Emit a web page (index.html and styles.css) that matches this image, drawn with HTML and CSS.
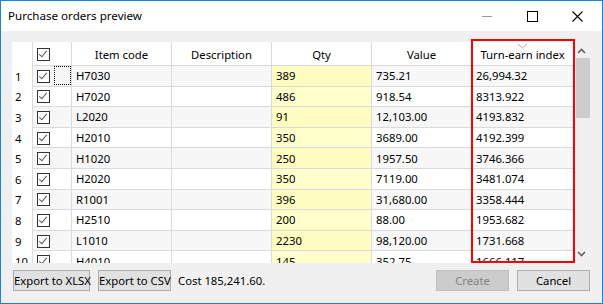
FILE: index.html
```html
<!DOCTYPE html>
<html>
<head>
    <meta charset="utf-8">
    <title>Purchase orders preview</title>
    <link rel="stylesheet" href="styles.css">
</head>
<body>
    <div class="window">
        <div class="titlebar">
            <div class="title">Purchase orders preview</div>
            <div class="caption-buttons">
                <svg class="cap" width="45" height="30" viewBox="0 0 45 30"><line x1="17" y1="15.5" x2="27" y2="15.5" stroke="#999" stroke-width="1"/></svg>
                <svg class="cap" width="45" height="30" viewBox="0 0 45 30"><rect x="17.5" y="10.5" width="10" height="10" fill="none" stroke="#000" stroke-width="1"/></svg>
                <svg class="cap" width="45" height="30" viewBox="0 0 45 30"><path d="M17.5 10.5 L27.5 20.5 M27.5 10.5 L17.5 20.5" stroke="#000" stroke-width="1.1"/></svg>
            </div>
        </div>
        <div class="content">
            <div class="grid">
                <div class="table-wrap">
                    <table class="orders">
                        <thead>
                            <tr>
                                <th class="c-num"></th>
                                <th class="c-chk"><span class="checkbox checked"></span></th>
                                <th class="c-col">Item code</th>
                                <th class="c-col">Description</th>
                                <th class="c-col">Qty</th>
                                <th class="c-col">Value</th>
                                <th class="c-last">Turn-earn index<svg class="sort" width="11" height="6" viewBox="0 0 11 6"><path d="M1 1 L5.5 5 L10 1" fill="none" stroke="#a8a8a8" stroke-width="1"/></svg></th>
                            </tr>
                        </thead>
                        <tbody id="rows"></tbody>
                    </table>
                </div>
                <div class="scrollbar">
                    <svg class="arrow" width="17" height="12" viewBox="0 0 17 12"><path d="M5 8 L8.5 4.5 L12 8" fill="none" stroke="#606060" stroke-width="1.6"/></svg>
                    <div class="thumb"></div>
                    <svg class="arrow down" width="17" height="12" viewBox="0 0 17 12"><path d="M5 4 L8.5 7.5 L12 4" fill="none" stroke="#606060" stroke-width="1.6"/></svg>
                </div>
                <div class="highlight"></div>
            </div>
            <div class="footer">
                <button class="btn btn-xlsx">Export to XLSX</button>
                <button class="btn">Export to CSV</button>
                <span class="cost">Cost 185,241.60.</span>
                <span class="spacer"></span>
                <button class="btn" disabled>Create</button>
                <button class="btn">Cancel</button>
            </div>
        </div>
    </div>
    <script>
        const orders = [
            ['H7030', '389', '735.21', '26,994.32'],
            ['H7020', '486', '918.54', '8313.922'],
            ['L2020', '91', '12,103.00', '4193.832'],
            ['H2010', '350', '3689.00', '4192.399'],
            ['H1020', '250', '1957.50', '3746.366'],
            ['H2020', '350', '7119.00', '3481.074'],
            ['R1001', '396', '31,680.00', '3358.444'],
            ['H2510', '200', '88.00', '1953.682'],
            ['L1010', '2230', '98,120.00', '1731.668'],
            ['H4010', '145', '352.75', '1666.117']
        ];
        const body = document.getElementById('rows');
        orders.forEach((row, i) => {
            const tr = document.createElement('tr');
            tr.className = i % 2 === 0 ? 'odd' : 'even';
            tr.innerHTML =
                '<td class="num">' + (i + 1) + '</td>' +
                '<td class="chk"><span class="checkbox checked"></span>' +
                (i === 0 ? '<span class="focus"></span>' : '') + '</td>' +
                '<td>' + row[0] + '</td>' +
                '<td></td>' +
                '<td class="qty">' + row[1] + '</td>' +
                '<td>' + row[2] + '</td>' +
                '<td class="last">' + row[3] + '</td>';
            body.appendChild(tr);
        });
    </script>
</body>
</html>
```

FILE: styles.css
```css
html, body {
    margin: 0;
    padding: 0;
}
body {
    font-family: "Noto Sans", "Open Sans", sans-serif;
    font-size: 11.3px;
    color: #000;
    background: #fff;
}
.window {
    width: 603px;
    height: 304px;
    box-sizing: border-box;
    border: 1px solid #1883d7;
    background: #f0f0f0;
    display: flex;
    flex-direction: column;
}
.titlebar {
    height: 30px;
    background: #fff;
    display: flex;
    align-items: center;
}
.title {
    flex: 1;
    padding-left: 7px;
    padding-bottom: 1px;
    font-size: 11.6px;
    color: #000;
}
.caption-buttons {
    display: flex;
    align-self: stretch;
    margin-right: 2px;
}
.cap {
    display: block;
}
.content {
    flex: 1;
    padding: 11px 11px 0 11px;
    display: flex;
    flex-direction: column;
}
.grid {
    position: relative;
    height: 221px;
    display: flex;
}
.table-wrap {
    width: 561px;
    overflow: hidden;
    background: #fff;
}
.orders {
    table-layout: fixed;
    border-collapse: separate;
    border-spacing: 0;
    width: 561px;
}
.orders th, .orders td {
    box-sizing: border-box;
    padding: 0 4px;
    border-right: 1px solid #dadada;
    border-bottom: 1px solid #dadada;
    white-space: nowrap;
    overflow: hidden;
    text-align: left;
    font-weight: normal;
}
.orders th {
    height: 24px;
    text-align: center;
    background: #fff;
    padding-top: 1px;
}
.orders td {
    height: 20.6px;
    line-height: 19px;
}
.orders .c-num { width: 21px; border-bottom: none; }
.orders .c-chk { width: 39px; text-align: left; }
.orders .c-col { width: 100px; }
.orders .c-last { width: 101px; border-right: none; position: relative; overflow: visible; }
.orders td.num {
    background: #fff;
    border-bottom: none;
    padding-left: 3px;
}
.orders td.last { border-right: none; }
.orders tr.odd td { background: #f7f7f7; }
.orders tr.even td { background: #fff; }
.orders tr.odd td.num, .orders tr.even td.num { background: #fff; }
.orders tr.odd td.qty { background: #fffcc2; }
.orders tr.even td.qty { background: #ffffcc; }
.orders td.chk, .orders th.c-chk {
    position: relative;
    padding-left: 4px;
}
.checkbox {
    display: inline-block;
    width: 13px;
    height: 13px;
    box-sizing: border-box;
    border: 1px solid #333;
    background: #fff;
    vertical-align: middle;
    position: relative;
    top: -1px;
}
.checkbox.checked::after {
    content: "";
    position: absolute;
    left: 3px;
    top: 0px;
    width: 3px;
    height: 7px;
    border-right: 1.5px solid #555;
    border-bottom: 1.5px solid #555;
    transform: rotate(40deg);
}
.focus {
    position: absolute;
    left: 21px;
    top: 0;
    width: 17px;
    height: 19px;
    box-sizing: border-box;
    border: 1px dotted #000;
}
.sort {
    position: absolute;
    left: 45px;
    top: 1px;
    display: block;
}
.scrollbar {
    width: 17px;
    display: flex;
    flex-direction: column;
    align-items: flex-end;
}
.arrow {
    display: block;
    margin-top: 3px;
}
.arrow.down {
    margin-top: auto;
    margin-bottom: 3px;
}
.thumb {
    width: 14px;
    height: 60px;
    margin-top: 1px;
    background: #cdcdcd;
}
.highlight {
    position: absolute;
    left: 459px;
    top: -3px;
    width: 104px;
    height: 224px;
    box-sizing: border-box;
    border: 2px solid #f00;
    pointer-events: none;
}
.footer {
    margin-top: 7px;
    display: flex;
    align-items: center;
    gap: 8px;
    padding-left: 1px;
    padding-right: 1px;
}
.btn {
    height: 21px;
    width: 73px;
    padding: 0;
    font-family: inherit;
    font-size: 11.3px;
    color: #000;
    background: #e1e1e1;
    border: 1px solid #adadad;
    white-space: nowrap;
}
.btn-xlsx {
    width: 77px;
}
.btn:disabled {
    background: #cccccc;
    border-color: #bfbfbf;
    color: #838383;
}
.cost {
    margin-left: -1px;
}
.spacer {
    flex: 1;
}
```
